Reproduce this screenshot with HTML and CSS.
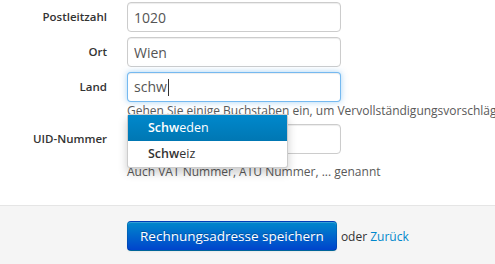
FILE: index.html
```html
<!DOCTYPE html>
<html lang="de">
<head>
  <meta charset="UTF-8">
  <title>Rechnungsadresse</title>
  <link rel="stylesheet" href="styles.css">
</head>
<body>
  <form class="form-horizontal">
    <div class="control-group">
      <label class="control-label">Postleitzahl</label>
      <div class="controls">
        <input type="text" class="field" value="1020">
      </div>
    </div>

    <div class="control-group">
      <label class="control-label">Ort</label>
      <div class="controls">
        <input type="text" class="field" value="Wien">
      </div>
    </div>

    <div class="control-group">
      <label class="control-label">Land</label>
      <div class="controls has-menu">
        <div class="field focused">schw<span class="caret"></span></div>
        <p class="help-block">Gehen Sie einige Buchstaben ein, um Vervollständigungsvorschläge</p>
        <ul class="typeahead">
          <li class="active"><a href="#"><strong>Schw</strong>eden</a></li>
          <li><a href="#"><strong>Schw</strong>eiz</a></li>
        </ul>
      </div>
    </div>

    <div class="control-group">
      <label class="control-label">UID-Nummer</label>
      <div class="controls">
        <input type="text" class="field" value="">
        <p class="help-block spaced">Auch VAT Nummer, ATU Nummer, ... genannt</p>
      </div>
    </div>

    <div class="form-actions">
      <button type="submit" class="btn-primary">Rechnungsadresse speichern</button>
      <span class="or">oder <a href="#">Zurück</a></span>
    </div>
  </form>
</body>
</html>
```

FILE: styles.css
```css
body {
  margin: 0;
  padding: 0;
  background-color: white;
  font-family: "Open Sans", "Noto Sans", sans-serif;
  font-size: 12px;
  color: #333;
  overflow: hidden;
}

.form-horizontal {
  padding-top: 2px;
}

.control-group {
  display: flex;
  margin-bottom: 5px;
}

.control-label {
  width: 107px;
  flex-shrink: 0;
  padding-top: 5px;
  line-height: 20px;
  text-align: right;
  font-weight: 600;
  font-size: 11.5px;
  color: #333;
}

.controls {
  margin-left: 20px;
  position: relative;
  white-space: nowrap;
}

.field {
  box-sizing: border-box;
  display: block;
  width: 214px;
  height: 30px;
  padding: 4px 6px;
  margin: 0;
  font-family: inherit;
  font-size: 14px;
  line-height: 20px;
  color: #555;
  background-color: white;
  border: 1px solid #ccc;
  border-radius: 4px;
  box-shadow: inset 0 1px 1px rgba(0,0,0,0.075);
}

.field.focused {
  border-color: rgba(82,168,236,0.8);
  box-shadow: inset 0 1px 1px rgba(0,0,0,0.075), 0 0 6px rgba(82,168,236,0.5);
}

.caret {
  display: inline-block;
  width: 1px;
  height: 17px;
  margin-left: 1px;
  vertical-align: -4px;
  background-color: #333;
}

.help-block {
  margin: 0;
  font-size: 12px;
  line-height: 17px;
  color: #595959;
}

.help-block.spaced {
  margin-top: 9px;
  line-height: 18px;
}

.typeahead {
  position: absolute;
  z-index: 10;
  top: 42px;
  left: 0;
  width: 161px;
  box-sizing: border-box;
  margin: 0;
  padding: 0;
  list-style: none;
  background-color: white;
  border: 1px solid rgba(0,0,0,0.2);
  border-radius: 3px;
  box-shadow: 0 5px 10px rgba(0,0,0,0.2);
}

.typeahead a {
  display: block;
  padding: 3px 20px;
  line-height: 20px;
  font-size: 12.5px;
  color: #333;
  text-decoration: none;
}

.typeahead strong {
  font-weight: 600;
}

.typeahead .active a {
  color: white;
  background-color: #0081c2;
  background-image: linear-gradient(to bottom, #0088cc, #0077b3);
}

.form-actions {
  margin-top: 24px;
  padding: 15px 0 20px 127px;
  height: 30px;
  background-color: #f5f5f5;
  border-top: 1px solid #e5e5e5;
  display: flex;
  align-items: center;
}

.btn-primary {
  box-sizing: border-box;
  height: 30px;
  padding: 4px 12px;
  font-family: inherit;
  font-size: 13.5px;
  line-height: 20px;
  color: white;
  text-shadow: 0 -1px 0 rgba(0,0,0,0.25);
  background-color: #006dcc;
  background-image: linear-gradient(to bottom, #0088cc, #0044cc);
  border: 1px solid rgba(0,0,0,0.1);
  border-bottom-color: rgba(0,0,0,0.25);
  border-radius: 4px;
  box-shadow: inset 0 1px 0 rgba(255,255,255,0.2), 0 1px 2px rgba(0,0,0,0.05);
  cursor: pointer;
}

.or {
  margin-left: 4px;
  font-size: 12px;
  color: #333;
}

.or a {
  color: #0088cc;
  text-decoration: none;
}
```
